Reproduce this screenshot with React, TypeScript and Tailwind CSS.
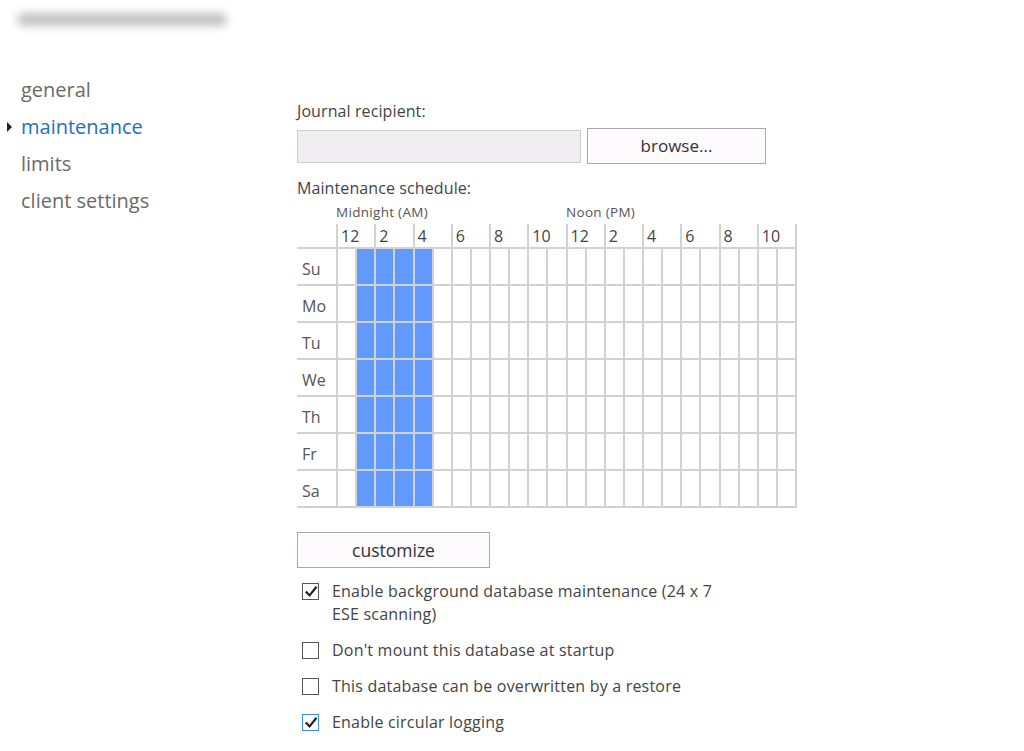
import React from "react";

const DAYS = ["Su", "Mo", "Tu", "We", "Th", "Fr", "Sa"];
const HOURS = ["12", "2", "4", "6", "8", "10", "12", "2", "4", "6", "8", "10"];
const NAV = ["general", "maintenance", "limits", "client settings"];

const OPTIONS = [
  { label: "Enable background database maintenance (24 x 7 ESE scanning)", checked: true, focus: false },
  { label: "Don't mount this database at startup", checked: false, focus: false },
  { label: "This database can be overwritten by a restore", checked: false, focus: false },
  { label: "Enable circular logging", checked: true, focus: true },
];

function Check() {
  return (
    <svg width="14" height="14" viewBox="0 0 14 14" fill="none">
      <path d="M2.5 7.2 L5.6 10.4 L11.8 2.6" stroke="#222" strokeWidth="2.2" strokeLinecap="square" />
    </svg>
  );
}

export default function App() {
  return (
    <div className="relative h-[751px] w-[1024px] overflow-hidden bg-white text-[#444]" style={{ fontFamily: '"Open Sans", "Noto Sans", sans-serif' }}>
      {/* blurred title */}
      <div className="pl-[17px] pt-[13px]">
        <div className="h-[13px] w-[210px] rounded-full bg-[#c2c2c2] blur-[4px]" />
      </div>

      <div className="flex pt-[45px]">
        {/* nav */}
        <nav className="w-[297px] shrink-0">
          {NAV.map((item) => {
            const active = item === "maintenance";
            return (
              <div key={item} className="relative flex h-[37px] items-center pl-[21px]">
                {active && <span className="absolute left-[7px] top-[14px] h-0 w-0 border-y-[5px] border-l-[5px] border-y-transparent border-l-[#222]" />}
                <span className={`text-[20px] ${active ? "text-[#1f6fc2]" : "text-[#6a6a6a]"}`}>{item}</span>
              </div>
            );
          })}
        </nav>

        {/* main */}
        <div className="flex flex-col pt-[29px]">
          <label className="text-[16px] leading-[22px] tracking-[0.1px] text-[#444]">Journal recipient:</label>
          <div className="mt-[6px] flex items-center gap-[6px]">
            <div className="h-[33px] w-[284px] border border-[#cfcfcf] bg-[#f1eef1]" />
            <button className="h-[36px] w-[179px] border border-[#a9a9a9] bg-[#fdfbfd] text-[17px] text-[#333]">browse...</button>
          </div>

          <label className="mt-[13px] text-[16px] leading-[22px] tracking-[0.1px] text-[#444]">Maintenance schedule:</label>

          <div className="mt-[1px] w-[500px]">
            <div className="flex h-[24px] items-center text-[13.5px] tracking-[0.3px] text-[#555]">
              <span className="ml-[39px] w-[230px]">Midnight (AM)</span>
              <span>Noon (PM)</span>
            </div>
            <div className="flex h-[25px] border-b-2 border-[#d2d2d2]">
              <div className="w-[39px]" />
              <div className="flex flex-1 border-r-2 border-[#d2d2d2]">
                {HOURS.map((h, i) => (
                  <div key={i} className="flex-1 border-l-2 border-[#d2d2d2] pl-[3px] text-[16px] leading-[25px] text-[#444]">
                    {h}
                  </div>
                ))}
              </div>
            </div>
            {DAYS.map((d) => (
              <div key={d} className="flex h-[37px] border-b-2 border-[#d2d2d2]">
                <div className="w-[39px] pl-[5px] pt-[3px] text-[16px] leading-[35px] text-[#555]">{d}</div>
                <div className="flex flex-1 border-r-2 border-[#d2d2d2]">
                  {Array.from({ length: 24 }).map((_, i) => (
                    <div key={i} className={`flex-1 border-l-2 border-[#d2d2d2] ${i >= 1 && i <= 4 ? "bg-[#6199fd]" : "bg-white"}`} />
                  ))}
                </div>
              </div>
            ))}
          </div>

          <button className="mt-[24px] h-[36px] w-[193px] border border-[#a9a9a9] bg-[#fdfbfd] text-[17.5px] text-[#333]">customize</button>

          <div className="mt-[12px] flex flex-col gap-[13px]">
            {OPTIONS.map((o) => (
              <div key={o.label} className="flex items-start">
                <div className={`ml-[5px] mt-[3px] flex h-[17px] w-[17px] shrink-0 items-center justify-center border bg-white ${o.focus ? "border-[#3b8fe0]" : "border-[#555]"}`}>
                  {o.checked && <Check />}
                </div>
                <span className="ml-[13px] w-[395px] text-[16px] leading-[23px] tracking-[0.2px] text-[#444]">{o.label}</span>
              </div>
            ))}
          </div>
        </div>
      </div>
    </div>
  );
}
